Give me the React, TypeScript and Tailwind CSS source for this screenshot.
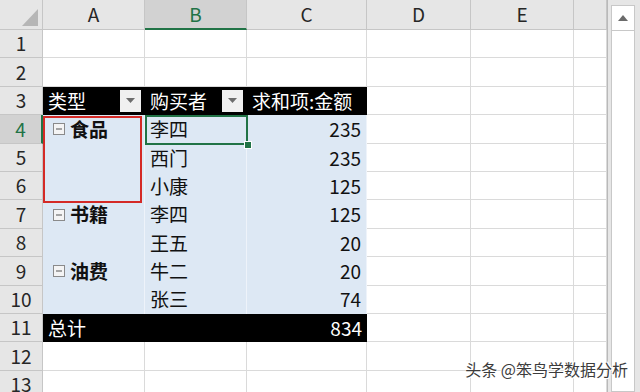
import React from "react";

const HDR = "bg-[#e6e6e6] border-r border-b border-[#c6c6c6] flex items-center justify-center text-[19px] text-[#262626]";
const WHITE = "bg-white border-r border-b border-[#dadada]";
const BLUE = "bg-[#dde8f4] border-r border-[#eef3fa] flex items-center text-[19px] text-[#111]";
const BLACK = "bg-black flex items-center text-[19px] text-white";

function Minus() {
  return (
    <svg width="12" height="12" viewBox="0 0 12 12" className="mr-[5px] shrink-0">
      <rect x="0.5" y="0.5" width="11" height="11" fill="#f4f4f4" stroke="#8a8a8a" />
      <line x1="3" y1="6" x2="9" y2="6" stroke="#555" strokeWidth="1" />
    </svg>
  );
}

function Drop() {
  return (
    <div className="ml-auto mr-[4px] w-[21px] h-[22px] bg-[#f0f0f0] flex items-center justify-center">
      <svg width="9" height="5" viewBox="0 0 9 5">
        <polygon points="0,0 9,0 4.5,5" fill="#6d6d6d" />
      </svg>
    </div>
  );
}

const data: Record<number, [string, string, string]> = {
  4: ["食品", "李四", "235"],
  5: ["", "西门", "235"],
  6: ["", "小康", "125"],
  7: ["书籍", "李四", "125"],
  8: ["", "王五", "20"],
  9: ["油费", "牛二", "20"],
  10: ["", "张三", "74"],
};

function Row({ n }: { n: number }) {
  const active = n === 4;
  const rh = active ? (
    <div className="bg-[#d2d2d2] border-r-2 border-r-[#217346] border-b border-b-[#c6c6c6] flex items-center justify-center text-[19px] text-[#217346]">{n}</div>
  ) : (
    <div className={HDR}>{n}</div>
  );
  let abc: React.ReactNode;
  if (n === 3) {
    abc = (
      <>
        <div className={BLACK + " pl-[5px]"}>类型<Drop /></div>
        <div className={BLACK + " pl-[5px]"}>购买者<Drop /></div>
        <div className={BLACK + " pl-[5px]"}>求和项:金额</div>
      </>
    );
  } else if (n === 11) {
    abc = (
      <>
        <div className={BLACK + " pl-[5px]"}>总计</div>
        <div className={BLACK}></div>
        <div className={BLACK + " justify-end pr-[5px]"}>834</div>
      </>
    );
  } else if (data[n]) {
    const [a, b, c] = data[n];
    abc = (
      <>
        <div className={BLUE + " pl-[10px]"}>
          {a && (
            <>
              <Minus />
              <span className="font-bold">{a}</span>
            </>
          )}
        </div>
        <div className={BLUE + " pl-[5px]"}>{b}</div>
        <div className={BLUE + " justify-end pr-[5px]"}>{c}</div>
      </>
    );
  } else {
    abc = (
      <>
        <div className={WHITE}></div>
        <div className={WHITE}></div>
        <div className={WHITE}></div>
      </>
    );
  }
  return (
    <>
      {rh}
      {abc}
      <div className={WHITE}></div>
      <div className={WHITE}></div>
      <div className={WHITE}></div>
    </>
  );
}

export default function App() {
  const rows = Array.from({ length: 13 }, (_, i) => i + 1);
  return (
    <div className="w-[640px] h-[392px] overflow-hidden bg-[#e6e6e6] flex font-['Noto_Sans_CJK_SC','Noto_Sans',sans-serif] relative">
      <div className="relative w-[608px] shrink-0 border-r border-[#b9b9b9]">
        <div className="grid grid-cols-[43px_102px_102px_120px_104px_103px_33px] grid-rows-[30px_repeat(13,28.4px)]">
          <div className="bg-[#e6e6e6] border-r border-b border-[#c6c6c6]">
            <svg width="42" height="29" viewBox="0 0 42 29">
              <polygon points="22,26 38,26 38,9" fill="#b6b6b6" />
            </svg>
          </div>
          <div className={HDR}>A</div>
          <div className="bg-[#d2d2d2] border-r border-r-[#c6c6c6] border-b-2 border-b-[#217346] flex items-center justify-center text-[19px] text-[#217346]">B</div>
          <div className={HDR}>C</div>
          <div className={HDR}>D</div>
          <div className={HDR}>E</div>
          <div className={HDR}></div>
          {rows.map((n) => (
            <Row key={n} n={n} />
          ))}
        </div>
        {/* red highlight box */}
        <div className="absolute left-[43px] top-[116px] w-[99px] h-[87px] border-2 border-[#d42a26]"></div>
        {/* active cell selection */}
        <div className="absolute left-[145px] top-[115px] w-[103px] h-[30px] border-2 border-[#217346]"></div>
        <div className="absolute left-[244px] top-[141px] w-[6px] h-[6px] bg-[#217346] border border-white box-content"></div>
      </div>
      <div className="flex-1 pl-[3px] pr-[5px] pt-[5px]">
        <div className="h-full bg-white border border-[#c8c8c8] flex flex-col">
          <div className="h-[25px] border-b border-[#c8c8c8] flex items-center justify-center">
            <svg width="10" height="6" viewBox="0 0 10 6">
              <polygon points="0,6 10,6 5,0" fill="#6b6b6b" />
            </svg>
          </div>
        </div>
      </div>
      <div className="absolute right-[12px] bottom-[11px] text-[16px] text-[#3c3c3c] [text-shadow:1px_1px_0_#fff,-1px_-1px_0_#fff,1px_-1px_0_#fff,-1px_1px_0_#fff]">
        头条 @笨鸟学数据分析
      </div>
    </div>
  );
}
